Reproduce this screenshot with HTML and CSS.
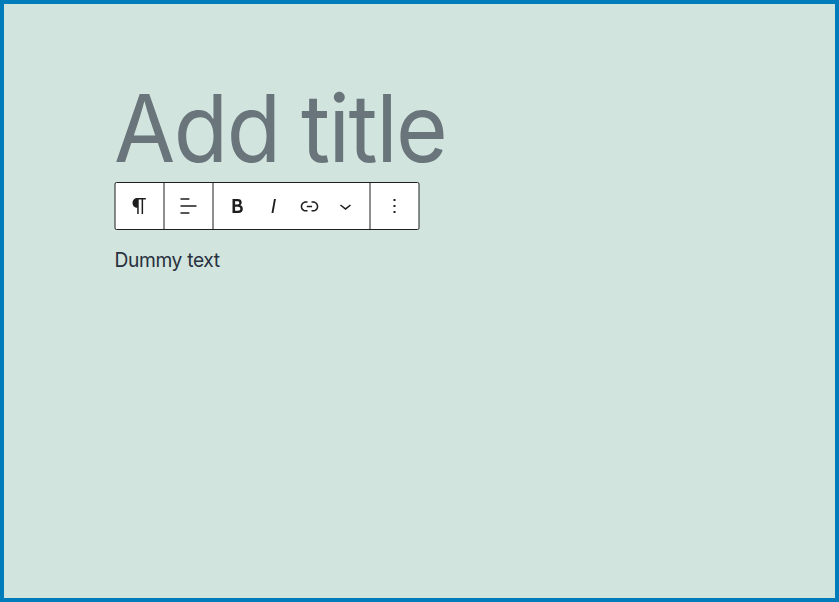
FILE: index.html
```html
<!DOCTYPE html>
<html lang="en">
<head>
<meta charset="utf-8">
<title>Editor</title>
<link rel="stylesheet" href="styles.css">
</head>
<body>
<main class="editor">
  <h1 class="title">Add title</h1>
  <div class="toolbar">
    <div class="group single"><button aria-label="Paragraph"><svg viewBox="0 0 24 24"><path d="M18.3 4H9.9v-.1l-.9.2c-2.3.4-4 2.4-4 4.8s1.7 4.4 4 4.8l.7.1V20h1.5V5.5h2.9V20h1.5V5.5h2.7V4z"/></svg></button></div>
    <div class="group single"><button aria-label="Align"><svg viewBox="0 0 24 24"><path d="M4 19.8h8.900v-1.500H4v1.500zm8.900-15.600H4v1.500h8.900V4.200zm-8.900 7v1.500h16v-1.500H4z"/></svg></button></div>
    <div class="group format">
      <button aria-label="Bold"><svg viewBox="0 0 24 24"><path d="M14.700 11.300c1-.6 1.500-1.600 1.500-3 0-2.300-1.300-3.400-4-3.400H7v14h5.800c1.400 0 2.500-.3 3.300-1 .8-.7 1.200-1.700 1.200-2.900.1-1.900-.8-3.100-2.600-3.700zm-5.100-4h2.300c.6 0 1.100.1 1.400.4.3.3.5.7.5 1.200s-.2 1-.5 1.200c-.3.3-.8.4-1.400.4H9.600V7.300zm4.600 9c-.4.3-1 .4-1.700.4H9.600v-3.900h2.900c.7 0 1.300.2 1.700.5.4.3.6.8.6 1.500s-.2 1.200-.6 1.500z"/></svg></button>
      <button aria-label="Italic"><svg viewBox="0 0 24 24"><path d="M12.500 5L10 19h1.900l2.500-14z"/></svg></button>
      <button aria-label="Link"><svg viewBox="0 0 24 24"><path d="M15.600 7.200H14v1.500h1.600c2 0 3.700 1.700 3.700 3.700s-1.700 3.700-3.700 3.700H14v1.500h1.600c2.800 0 5.200-2.300 5.200-5.200 0-2.900-2.300-5.200-5.200-5.200zM4.700 12.400c0-2 1.700-3.700 3.700-3.700H10V7.200H8.400c-2.900 0-5.200 2.300-5.200 5.200 0 2.900 2.300 5.200 5.200 5.200H10v-1.500H8.400c-2 0-3.700-1.700-3.700-3.700zm4.600.9h5.300v-1.500H9.300v1.500z"/></svg></button>
      <button aria-label="More"><svg viewBox="0 0 24 24"><path d="M17.500 11.600L12 16l-5.500-4.400.9-1.200L12 14l4.500-3.600 1 1.200z"/></svg></button>
    </div>
    <div class="group single"><button aria-label="Options"><svg viewBox="0 0 24 24"><path d="M13 19h-2v-2h2v2zm0-6h-2v-2h2v2zm0-6h-2V5h2v2z"/></svg></button></div>
  </div>
  <p class="text">Dummy text</p>
</main>
</body>
</html>
```
FILE: styles.css
```css
* { box-sizing: border-box; }
body { margin: 0; }
.editor {
  height: 602px;
  padding: 73px 110px 0;
  border: 4px solid #007cba;
  background: #d1e4dd;
  color: #28303d;
  font-family: Inter, sans-serif;
}
.title {
  margin: 0 0 3px;
  height: 102px;
  line-height: 102px;
  font-size: 93.5px;
  font-weight: 400;
  letter-spacing: -1.6px;
  word-spacing: -2px;
  color: #69747b;
  white-space: nowrap;
  transform: scaleX(.95);
  transform-origin: left;
}
.toolbar {
  display: flex;
  width: 305px;
  height: 48px;
  border: 1px solid #1e1e1e;
  border-radius: 2px;
  background: #fff;
  transform: translateX(.5px);
}
.group { display: flex; border-right: 1px solid #1e1e1e; }
.group:last-child { border-right: 0; }
.single button { width: 48px; }
.format { padding: 0 6px; }
button {
  display: flex;
  align-items: center;
  justify-content: center;
  width: 36px;
  padding: 0;
  border: 0;
  background: none;
}
svg { width: 24px; height: 24px; fill: #1e1e1e; }
.text {
  margin: 15px 0 0;
  font-size: 20px;
  line-height: 30px;
  letter-spacing: -.35px;
  transform: translateX(.4px) scaleX(.96);
  transform-origin: left;
}
```
